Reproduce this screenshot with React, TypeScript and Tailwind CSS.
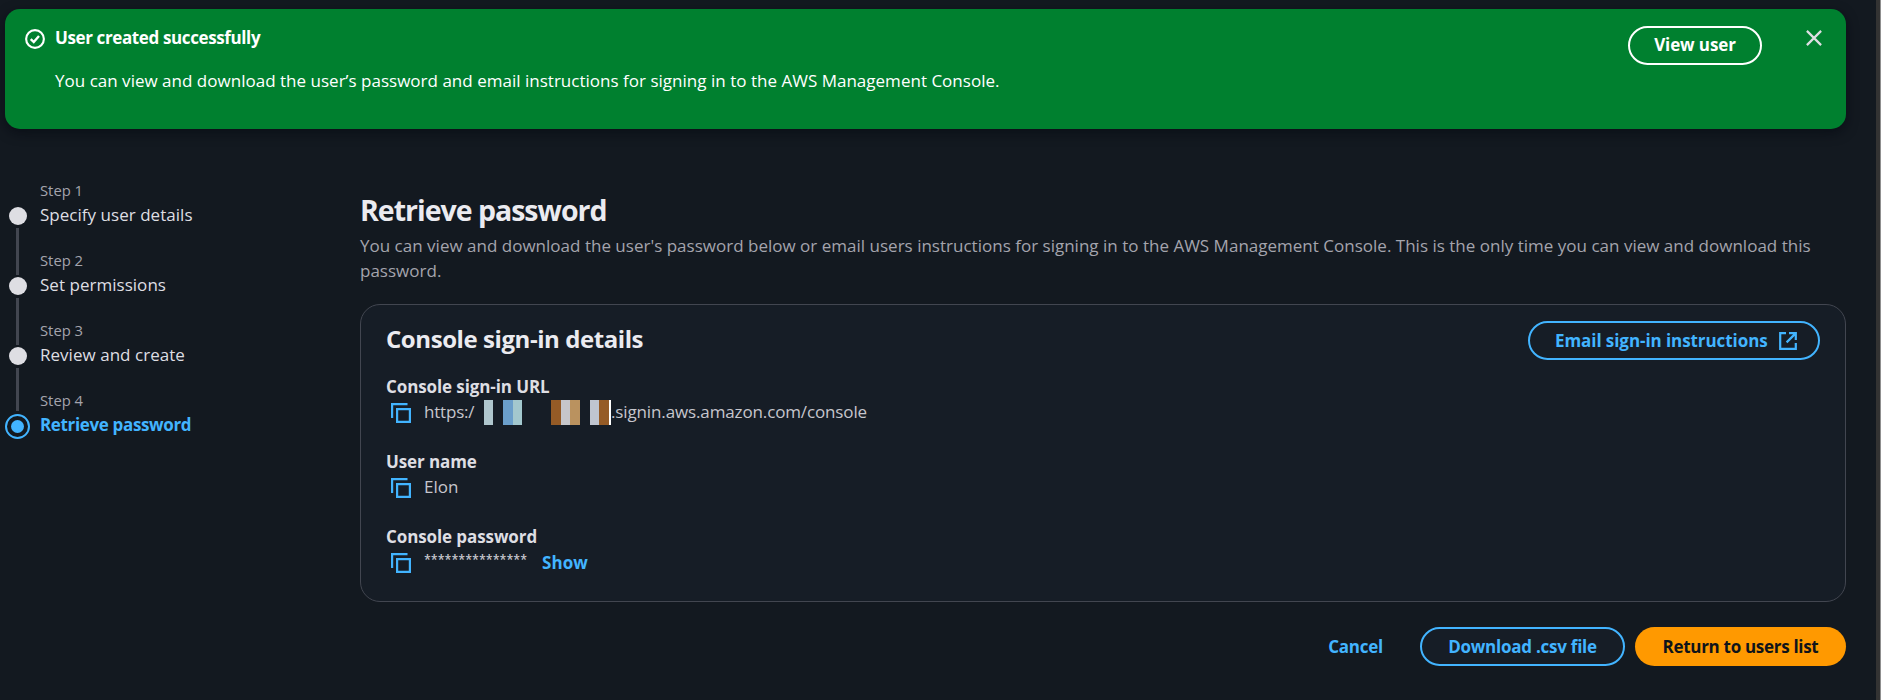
import type { ReactNode } from "react";

const steps = ["Specify user details", "Set permissions", "Review and create", "Retrieve password"];

const redactedCells = [
  "w-[10px]",
  "w-[9px] bg-[#afc6cd]",
  "w-[10px]",
  "w-[10px] bg-[#6b9fcb]",
  "w-[9px] bg-[#a3c8ce]",
  "w-[29px]",
  "w-[10px] bg-[#955b26]",
  "w-[9px] bg-[#c6c6ca]",
  "w-[10px] bg-[#ba925f]",
  "w-[10px]",
  "w-[9px] bg-[#bfc5cf]",
  "w-[10px] bg-[#955b26]",
  "w-[2px] bg-white",
];

function CopyIcon() {
  return (
    <svg className="mt-[4px] ml-[5px] block h-5 w-5 shrink-0" viewBox="0 0 20 20" fill="none" stroke="#42b4ff" strokeWidth="2.2">
      <path d="M1.1 15V1.1H16.5" />
      <path d="M6.1 6.1H18.9V18.9H6.1Z" />
    </svg>
  );
}

function Field({ label, className, children }: { label: string; className?: string; children: ReactNode }) {
  return (
    <div className={className}>
      <div className="h-[25px] font-bold tracking-[-0.1px] text-[#dedee3]">{label}</div>
      <div className="flex h-[25px]">
        <CopyIcon />
        <div className="ml-[13px] flex text-[#c6c6cd]">{children}</div>
      </div>
    </div>
  );
}

function Banner() {
  return (
    <div className="mt-[9px] ml-[5px] flex h-[120px] w-[1841px] rounded-[15px] bg-[#00802f] text-white shadow-[0_4px_12px_rgba(5,8,16,0.6)]">
      <svg className="mt-5 ml-5 block h-5 w-5 shrink-0" viewBox="0 0 16 16" fill="none" stroke="white" strokeWidth="1.7">
        <circle cx="8" cy="8" r="7.1" />
        <path d="M4.6 8.1 7 10.4 11.2 5.6" strokeWidth="1.9" />
      </svg>
      <div className="mt-4 ml-[10px] flex-1">
        <div className="font-bold tracking-[-0.38px]">User created successfully</div>
        <div className="mt-[18px] tracking-[0.015px]">
          You can view and download the user’s password and email instructions for signing in to the AWS Management Console.
        </div>
      </div>
      <button className="mt-[17px] flex h-[39px] w-[134px] items-center justify-center rounded-full border-2 border-white pb-[2px] font-bold tracking-[-0.1px]">
        View user
      </button>
      <svg className="mt-[21px] mr-6 ml-[44px] block h-4 w-4" viewBox="0 0 16 16" stroke="#dedee3" strokeWidth="2.2">
        <path d="M.9 .9 15.1 15.1M15.1 .9 .9 15.1" />
      </svg>
    </div>
  );
}

function Steps() {
  return (
    <ol className="w-[355px] shrink-0 pt-[52px]">
      {steps.map((title, i) => {
        const active = i === steps.length - 1;
        return (
          <li key={title} className="flex h-[70px]">
            <div className="flex w-[25px] shrink-0 flex-col items-center">
              {active ? (
                <div className="mt-[23px] flex h-[25px] w-[25px] shrink-0 items-center justify-center rounded-full border-2 border-[#42b4ff]">
                  <div className="h-[13px] w-[13px] rounded-full bg-[#42b4ff]" />
                </div>
              ) : (
                <>
                  <div className="mt-[26px] h-[18px] w-[18px] shrink-0 rounded-full bg-[#dedee3]" />
                  <div
                    className={
                      i === steps.length - 2
                        ? "mt-[3px] h-[43px] w-[3px] shrink-0 bg-[#424650]"
                        : "mt-[3px] h-[47px] w-[3px] shrink-0 bg-[#424650]"
                    }
                  />
                </>
              )}
            </div>
            <div className="ml-[10px]">
              <div className="h-[21px] text-[14.8px] leading-[18px] text-[#a4a4ad]">Step {i + 1}</div>
              <div className={active ? "font-bold tracking-[-0.35px] text-[#42b4ff]" : "tracking-[0.03px] text-[#dedee3]"}>
                {title}
              </div>
            </div>
          </li>
        );
      })}
    </ol>
  );
}

function SignInDetails() {
  return (
    <section className="mt-[21px] h-[298px] rounded-[20px] border border-[#424650] bg-[#161d26] pl-[25px]">
      <div className="flex h-[69px] items-start justify-between pr-[25px]">
        <h2 className="mt-[18px] text-[24px] leading-[32px] font-bold tracking-[-0.43px] text-[#ebebf0]">
          Console sign-in details
        </h2>
        <button className="mt-4 flex h-[39px] w-[292px] items-center rounded-full border-2 border-[#42b4ff] pl-[25px] font-bold tracking-[-0.07px] text-[#42b4ff]">
          <span className="w-[224px] text-left whitespace-nowrap">Email sign-in instructions</span>
          <svg className="block h-[18px] w-[18px]" viewBox="0 0 18 18" fill="none" stroke="currentColor" strokeWidth="2.2">
            <path d="M7 1.2H1.2V16.8H16.8V11" />
            <path d="M10 1.2H16.8V8M16.6 1.4 7.6 10.4" />
          </svg>
        </button>
      </div>
      <Field label="Console sign-in URL">
        <span className="w-[50px] tracking-[-0.2px]">https:/</span>
        <span className="flex h-[25px] pt-px">
          {redactedCells.map((cell, i) => (
            <span key={i} className={"block h-[25px] " + cell} />
          ))}
        </span>
        <span className="tracking-[-0.13px]">.signin.aws.amazon.com/console</span>
      </Field>
      <Field label="User name" className="mt-[25px]">
        Elon
      </Field>
      <Field label="Console password" className="mt-[25px]">
        <span className="w-[118px] text-[17.6px] [font-stretch:75%]">***************</span>
        <span className="mt-px font-bold tracking-[0.1px] text-[#42b4ff]">Show</span>
      </Field>
    </section>
  );
}

export default function App() {
  return (
    <div className="flex h-[700px] w-[1881px] overflow-hidden bg-[#131920] font-['Open_Sans',sans-serif] text-[17px] leading-[25px]">
      <div className="w-[1876px]">
        <Banner />
        <div className="ml-[5px] flex w-[1841px]">
          <Steps />
          <main className="w-[1486px]">
            <h1 className="mt-[63px] h-[39px] text-[28.5px] leading-[36px] font-bold tracking-[-1px] text-[#ebebf0]">
              Retrieve password
            </h1>
            <p className="mt-[2px] tracking-[0.01px] text-[#a4a4ad]">
              You can view and download the user's password below or email users instructions for signing in to the AWS
              Management Console. This is the only time you can view and download this password.
            </p>
            <SignInDetails />
            <div className="mt-[25px] flex h-[39px] items-center justify-end font-bold tracking-[-0.25px] text-[#42b4ff]">
              <button className="mr-[37px]">Cancel</button>
              <button className="flex h-[39px] w-[205px] items-center justify-center rounded-full border-2 border-[#42b4ff] bg-[#161d26]">
                Download .csv file
              </button>
              <button className="ml-[10px] flex h-[39px] w-[211px] items-center justify-center rounded-full bg-[#ff9900] tracking-[-0.3px] text-[#0f141a]">
                Return to users list
              </button>
            </div>
          </main>
        </div>
      </div>
      <div className="w-1 bg-[#333333]" />
      <div className="w-px bg-[#8f8f8f]" />
    </div>
  );
}
